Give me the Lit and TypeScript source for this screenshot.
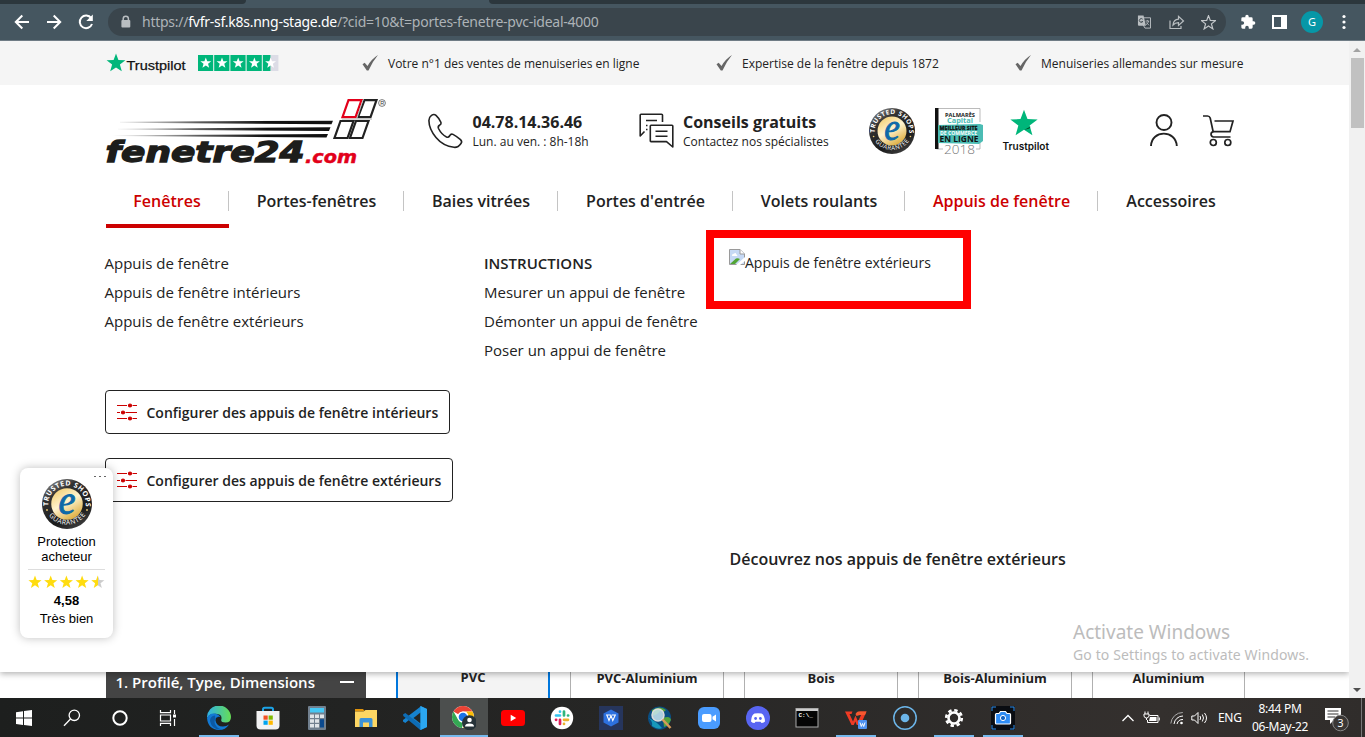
import { LitElement, html, svg, css } from "lit";
import { customElement, property } from "lit/decorators.js";

const STAR = "M10 0.8L12.4 7.3L19.4 7.5L13.9 11.8L15.8 18.5L10 14.6L4.2 18.5L6.1 11.8L0.6 7.5L7.6 7.3Z";

/** Round guarantee seal with lettering on its ring. */
@customElement("guarantee-seal")
class GuaranteeSeal extends LitElement {
  @property({ type: Number }) size = 46;
  static styles = css`
    :host { display: block; line-height: 0; }
    svg { overflow: visible; }
    .ring { font: 700 14px "Open Sans", sans-serif; fill: #fff; }
    .lower { font-weight: 400; font-size: 13.5px; }
    .e { font: italic 400 84px "Liberation Serif", serif; fill: #0f6aa8; stroke: #0f6aa8; stroke-width: 2; }
  `;
  render() {
    return html`<svg width=${this.size} height=${this.size} viewBox="0 0 100 100">
      <defs>
        <linearGradient id="dark" x1="0.2" y1="0" x2="0.8" y2="1">
          <stop offset="0" stop-color="#8a8a8a" /><stop offset="0.25" stop-color="#333" />
          <stop offset="0.7" stop-color="#1b1b1b" /><stop offset="1" stop-color="#444" />
        </linearGradient>
        <linearGradient id="gold" x1="0.2" y1="0" x2="0.8" y2="1">
          <stop offset="0" stop-color="#f3cf73" /><stop offset="0.45" stop-color="#fff3cf" />
          <stop offset="1" stop-color="#d9a52f" />
        </linearGradient>
        <path id="up" d="M13 57A37.5 37.5 0 1 1 87 57" />
        <path id="down" d="M9 65A45 45 0 0 0 91 65" />
      </defs>
      <circle cx="50" cy="50" r="50" fill="url(#dark)" />
      <circle cx="50" cy="50" r="31.5" fill="url(#gold)" />
      <text class="ring"><textPath href="#up" startOffset="3" textLength="125">TRUSTED SHOPS</textPath></text>
      <text class="ring lower"><textPath href="#down" startOffset="9" textLength="86">GUARANTEE</textPath></text>
      <circle cx="10" cy="62" r="1.8" fill="#f3cf73" /><circle cx="90" cy="62" r="1.8" fill="#f3cf73" />
      <text class="e" x="33" y="69" textLength="34" lengthAdjust="spacingAndGlyphs">e</text>
    </svg>`;
  }
}

@customElement("browser-bar")
class BrowserBar extends LitElement {
  static styles = css`
    :host { display: block; height: 41px; background: #455660; font-family: "Noto Sans", sans-serif; }
    .tabs { height: 4px; display: flex; justify-content: space-between; }
    .left, .right { background: #2c373d; }
    .left { width: 246px; border-bottom-right-radius: 4px; }
    .right { width: 876px; border-bottom-left-radius: 4px; }
    .bar { height: 36px; display: flex; align-items: center; border-bottom: 1px solid #6f7c85; }
    svg { display: block; flex: none; }
    .back { margin-left: 14px; }
    .fwd { margin-left: 16px; }
    .reload { margin-left: 15px; }
    .pill { margin-left: 13px; width: 1118px; height: 28px; border-radius: 14px; background: #3a454c; display: flex; align-items: center; box-sizing: border-box; padding: 0 10px 0 12px; }
    .url { margin-left: 10px; font-size: 14px; line-height: 28px; color: #adb3b7; white-space: nowrap; letter-spacing: -0.25px; }
    .host { color: #fff; }
    .tools { margin-left: auto; display: flex; gap: 16px; align-items: center; }
    .puzzle { margin-left: 14px; }
    .panel { margin-left: 16px; }
    .avatar { margin-left: 14px; width: 22px; height: 22px; border-radius: 50%; background: #0797a7; color: #fff; font-size: 11px; line-height: 22px; text-align: center; }
    .dots { margin-left: 19px; }
  `;
  render() {
    return html`
      <div class="tabs"><div class="left"></div><div class="right"></div></div>
      <div class="bar">
        <svg class="back" width="16" height="16" viewBox="0 0 16 16" fill="none" stroke="#fff" stroke-width="2"><path d="M15 8H2M8.3 1.5L1.8 8L8.3 14.5" /></svg>
        <svg class="fwd" width="16" height="16" viewBox="0 0 16 16" fill="none" stroke="#fff" stroke-width="2"><path d="M1 8H14M7.7 1.5L14.2 8L7.7 14.5" /></svg>
        <svg class="reload" width="18" height="18" viewBox="0 0 18 18"><path d="M14.2 5.2A6.3 6.3 0 1 0 15 11" fill="none" stroke="#fff" stroke-width="2" /><path d="M15.8 1.5V8H9.3Z" fill="#fff" /></svg>
        <div class="pill">
          <svg width="12" height="14" viewBox="0 0 12 14"><path d="M3.2 6V3.8A2.6 2.6 0 0 1 8.4 3.8V6" fill="none" stroke="#b9bec1" stroke-width="1.5" /><rect x="1.4" y="5" width="8.9" height="7.6" rx="1" fill="#b9bec1" /></svg>
          <div class="url">https://<span class="host">fvfr-sf.k8s.nng-stage.de</span>/?cid=10&amp;t=portes-fenetre-pvc-ideal-4000</div>
          <div class="tools">
            <svg width="15" height="16" viewBox="0 0 16 16"><path d="M6.5 3.5H14.4V14.5H8.5L6.5 11" fill="none" stroke="#b9bec1" /><path d="M1 1H7L9.5 12H2A1 1 0 0 1 1 11Z" fill="#b9bec1" /><path d="M6 5A2 2 0 1 0 6.2 7.5H4.7" fill="none" stroke="#3a454c" /><path d="M9 7H13M11 5.8V7M12.5 7Q11.5 10 9.5 11M10 8.5L12.8 11.5" fill="none" stroke="#b9bec1" stroke-width=".9" /></svg>
            <svg width="17" height="16" viewBox="0 0 17 16" fill="none" stroke="#b9bec1" stroke-width="1.2"><path d="M2 6.5V14.5H13V12" /><path d="M5 11Q5.5 5.5 10.5 5.2V2.3L15.5 7L10.5 11.5V8.6Q7 8.6 5 11Z" /></svg>
            <svg width="15" height="15" viewBox="0 0 20 20" fill="none" stroke="#c3c7ca" stroke-width="1.6"><path d=${STAR} /></svg>
          </div>
        </div>
        <svg class="puzzle" width="16" height="16" viewBox="0 0 24 24" fill="#fff"><path d="M20.5 11H19V7a2 2 0 0 0-2-2h-4V3.500a2.500 2.500 0 0 0-5 0V5H4a2 2 0 0 0-2 2v3.800h1.500a2.700 2.700 0 0 1 0 5.400H2V20a2 2 0 0 0 2 2h3.800v-1.500a2.700 2.700 0 0 1 5.400 0V22H17a2 2 0 0 0 2-2v-4h1.500a2.500 2.500 0 0 0 0-5z" /></svg>
        <svg class="panel" width="15" height="14" viewBox="0 0 15 14"><path fill="#fff" fill-rule="evenodd" d="M0 0H15V14H0ZM2 2V12H9V2Z" /></svg>
        <div class="avatar">G</div>
        <svg class="dots" width="4" height="16" viewBox="0 0 4 16" fill="#fff"><circle cx="2" cy="2.500" r="1.600" /><circle cx="2" cy="8" r="1.600" /><circle cx="2" cy="13.500" r="1.600" /></svg>
      </div>`;
  }
}

const tick = html`<svg width="18" height="16" viewBox="0 0 18 16"><path d="M1.500 9.200L3.700 7.800L6.500 11Q10.500 4 17 0Q11.500 6.500 7.500 15.500H5.800Z" fill="#666" /></svg>`;

@customElement("shop-header")
class ShopHeader extends LitElement {
  static styles = css`
    :host { display: block; font-family: "Open Sans", sans-serif; color: #222; white-space: nowrap; }
    svg { display: block; flex: none; overflow: visible; }
    .usp { height: 44px; background: #f5f5f5; display: flex; align-items: center; padding-left: 106px; font-size: 12px; }
    .stars { margin-left: 11px; }
    .tick { display: flex; align-items: center; gap: 9px; }
    .t1 { width: 354px; margin-left: 83px; }
    .t2 { width: 299px; }
    .head { height: 96px; display: flex; align-items: flex-start; }
    .logo { margin: 5px 0 0 95px; }
    .phone { margin: 28px 0 0 20.5px; }
    .chat { margin: 28px 0 0 0; }
    .info { margin: 28px 0 0 10px; width: 166px; }
    .info.second { width: 186px; margin-left: 9.500px; }
    .big { font-size: 16px; line-height: 18px; font-weight: 700; }
    .small { font-size: 12px; line-height: 22px; }
    .seal { margin-top: 23px; }
    .award { margin: 23px 0 0 20px; }
    .pilot { margin: 23px 0 0 18px; }
    .user { margin: 29px 0 0 98px; }
    .cart { margin: 29px 0 0 23px; }
    .nav { display: grid; grid-template-columns: 123px 175px 154px 175px 172px 193px 146px; margin-left: 106px; height: 47px; font-size: 16px; font-weight: 600; }
    .item { height: 43px; border-bottom: 4px solid transparent; }
    .on { border-bottom-color: #c00; color: #c00; }
    .red { color: #c00; }
    .label { margin-top: 10px; height: 20px; line-height: 20px; text-align: center; border-right: 1px solid #c4c4c4; padding-left: 1px; }
    .item:first-child .label { padding-left: 0; }
    .item:last-child .label { border: 0; padding: 0; }
    .tps { font: 400 13.500px "Liberation Sans", sans-serif; fill: #111; stroke: #111; stroke-width: 0.25; }
    .tpn { font: 600 10px Inter, sans-serif; fill: #111; }
    .wordmark { font: italic 700 28px "DejaVu Sans", sans-serif; fill: #1d1d1b; stroke: #1d1d1b; stroke-width: 1.3; }
    .dotcom { font: italic 700 18.500px "DejaVu Sans", sans-serif; fill: #e2001a; stroke: #e2001a; stroke-width: 0.5; }
    .award text { font-family: "Open Sans", sans-serif; font-weight: 700; }
    .award .year { font-weight: 300; }
  `;
  render() {
    const nav = ["Fenêtres", "Portes-fenêtres", "Baies vitrées", "Portes d'entrée", "Volets roulants", "Appuis de fenêtre", "Accessoires"];
    return html`
      <div class="usp">
        <svg width="81" height="22" viewBox="0 0 81 22"><path transform="translate(0 0.800)" d=${STAR} fill="#00b67a" /><text class="tps" x="20.500" y="17.900" textLength="59" lengthAdjust="spacingAndGlyphs">Trustpilot</text></svg>
        <svg class="stars" width="80" height="16" viewBox="0 0 80 16">
          ${[0, 1, 2, 3, 4].map((i) => svg`<g transform="translate(${i * 16.2} 0)"><rect width="15.200" height="16" fill="#00b67a" />${i === 4 ? svg`<rect x="7.600" width="8" height="16" fill="#dcdce6" />` : ""}<path transform="translate(2 2) scale(.58)" d=${STAR} fill="#fff" /></g>`)}
        </svg>
        <div class="tick t1">${tick}Votre n°1 des ventes de menuiseries en ligne</div>
        <div class="tick t2">${tick}Expertise de la fenêtre depuis 1872</div>
        <div class="tick">${tick}Menuiseries allemandes sur mesure</div>
      </div>
      <div class="head">
        <svg class="logo" width="312" height="80" viewBox="0 0 312 80">
          <defs><linearGradient id="speed" gradientUnits="userSpaceOnUse" x1="18" y1="0" x2="238" y2="0"><stop offset="0" stop-color="#222" stop-opacity="0" /><stop offset=".4" stop-color="#222" stop-opacity=".75" /><stop offset=".7" stop-color="#111" /></linearGradient></defs>
          <path d="M25 31.800L238 30.700L236.500 34.200L25 32.700Z" fill="url(#speed)" />
          <path d="M23 38.800L235.500 37.300L234 41L23 39.600Z" fill="url(#speed)" />
          <path d="M18 45.300L233 44L231.500 47.500L18 46.100Z" fill="url(#speed)" />
          <g fill="none" stroke-width="2.200" stroke="#222">
            <path stroke="#e2001a" d="M253.500 10.200H266.500L260.500 27.200H247.500Z" />
            <path d="M269.500 10.200H281.500L275.500 27.200H263Z" />
            <path d="M245.500 31H258.500L252.500 48H239.500Z" /><path d="M261 31H273.500L267.500 48H255Z" />
          </g>
          <path d="M247 29.100H277M268 10L262 28" stroke="#bbb" stroke-width="1" />
          <text class="wordmark" x="10.500" y="72.400" textLength="199" lengthAdjust="spacingAndGlyphs">fenetre24</text>
          <text class="dotcom" x="210" y="72.600" textLength="52" lengthAdjust="spacingAndGlyphs">.com</text>
          <circle cx="287" cy="13" r="3.400" fill="none" stroke="#444" stroke-width=".7" /><text x="285.200" y="15.200" font-family="Liberation Sans" font-size="5.500" fill="#333">R</text>
        </svg>
        <svg class="phone" width="35" height="36" viewBox="0 0 35 36" fill="none" stroke="#222" stroke-width="1.600" stroke-linejoin="round"><path d="M3.500 2.300Q6 .6 8 2.300Q11.500 5.500 13 9.500Q13.600 11 11.500 12.300Q9.600 13.500 10.500 15.500Q13.500 21.500 18.500 24Q20.500 24.800 21.500 23Q23 20.300 25 21.400Q29 23.600 32.500 26.600Q34.500 28.500 33 30.500Q30 34.800 26 34.300Q15 33 8 24.500Q1 16 .9 7.500Q1 4 3.500 2.300Z" /></svg>
        <div class="info"><div class="big">04.78.14.36.46</div><div class="small">Lun. au ven. : 8h-18h</div></div>
        <svg class="chat" width="35" height="36" viewBox="0 0 35 36" fill="none" stroke="#222" stroke-width="1.600" stroke-linejoin="round"><path d="M23.500 9V2Q23.500 1.200 22.500 1.200H2Q1.200 1.200 1.200 2V23L5.500 18.500M12 12.300H33Q33.800 12.300 33.800 13V34L27.500 28.600H12Q11.300 28.600 11.300 28V13Q11.300 12.300 12 12.300ZM7 7.500H18M7 12.500H8.500M7 16.500H8.500M16.500 18.200H28.500M16.500 23.200H28.500" /></svg>
        <div class="info second"><div class="big">Conseils gratuits</div><div class="small">Contactez nos spécialistes</div></div>
        <guarantee-seal class="seal" .size=${46}></guarantee-seal>
        <svg class="award" width="48" height="47" viewBox="0 0 48 47">
          <path d="M1.500 .5H45V14M45 35V41H1.500" fill="#fff" stroke="#aaa" stroke-width=".8" />
          <path d="M0 0H3.500V41H0Z" fill="#111" />
          <path d="M3 17L45 16L48 17V33L44 36L3 35Z" fill="#4bbcb4" />
          <text x="10" y="8.800" font-size="5.500" fill="#222" textLength="30" lengthAdjust="spacingAndGlyphs">PALMARÈS</text>
          <text x="12" y="15.200" font-size="7.500" fill="#4bbcb4" textLength="26" lengthAdjust="spacingAndGlyphs">Capital</text>
          <text x="4.500" y="21.800" font-size="5.200" fill="#111" stroke="#111" stroke-width=".3" textLength="38" lengthAdjust="spacingAndGlyphs">MEILLEUR SITE</text>
          <text x="5" y="26.600" font-size="4.800" fill="#fff" textLength="37" lengthAdjust="spacingAndGlyphs">DE COMMERCE</text>
          <text x="4.500" y="33.600" font-size="8.500" fill="#111" textLength="39" lengthAdjust="spacingAndGlyphs">EN LIGNE</text>
          <rect x="8" y="36" width="33" height="10" fill="#fff" />
          <text class="year" x="9" y="46" font-size="13.500" fill="#777" textLength="31" lengthAdjust="spacingAndGlyphs">2018</text>
        </svg>
        <svg class="pilot" width="50" height="47" viewBox="0 0 50 47"><path transform="translate(8.500 0.500) scale(1.450)" d=${STAR} fill="#00b67a" /><path d="M23 22L29.500 18.500L28.500 20.500Z" fill="#005128" /><text class="tpn" x="1.500" y="42" textLength="46.500" lengthAdjust="spacingAndGlyphs">Trustpilot</text></svg>
        <svg class="user" width="30" height="33" viewBox="0 0 30 33" fill="none" stroke="#222" stroke-width="1.900"><circle cx="15" cy="8.500" r="7.500" /><path d="M2 32C2.500 15.500 27 15.500 27.800 32" /></svg>
        <svg class="cart" width="34" height="33" viewBox="0 0 34 33" fill="none" stroke="#222" stroke-width="1.700"><path d="M1 2H5.500Q7.500 2 8.200 4L11 17M12.500 7H31L28 17.700H12Q9 18 9 20.300Q9.200 22.800 11.500 23H28.500" /><circle cx="11.300" cy="28.500" r="3" /><circle cx="25.800" cy="28.500" r="3" /></svg>
      </div>
      <div class="nav">${nav.map((n, i) => html`<div class="item ${i === 0 ? "on" : i === 5 ? "red" : ""}"><div class="label">${n}</div></div>`)}</div>`;
  }
}

@customElement("mega-menu")
class MegaMenu extends LitElement {
  static styles = css`
    :host { display: block; box-sizing: border-box; height: 444px; padding: 21px 0 0 105px; background: #fff; box-shadow: 0 2px 6px rgba(0, 0, 0, 0.3); clip-path: inset(0 0 -12px 0); position: relative; font-family: "Open Sans", sans-serif; font-size: 15px; color: #222; white-space: nowrap; }
    .cols { display: grid; grid-template-columns: 379px 245px 1fr; }
    .links { display: flex; flex-direction: column; height: 141px; }
    .first { margin-left: -0.5px; }
    .link { line-height: 29px; height: 29px; }
    .title { font-weight: 600; }
    .btn { display: flex; align-items: center; box-sizing: border-box; width: 345px; height: 44px; border: 1px solid #222; border-radius: 4px; padding-left: 11px; gap: 8.500px; font-size: 14px; font-weight: 600; }
    .btn.wide { width: 348px; margin-top: 24px; }
    .missing { display: flex; font-size: 14px; line-height: 27px; height: 301px; }
    .caption { font-size: 16px; line-height: 18px; font-weight: 600; padding-left: 0.5px; }
    .frame { position: absolute; left: 706px; top: 2px; width: 265px; height: 79px; box-sizing: border-box; border: 8px solid #f00; }
    .activate { position: absolute; left: 1073px; top: 392px; font-family: "Noto Sans", sans-serif; color: #bcbcbc; font-weight: 400; }
    .a1 { font-size: 19px; line-height: 25px; }
    .a2 { font-size: 14px; line-height: 20px; letter-spacing: 0.12px; }
    svg { display: block; flex: none; }
  `;
  render() {
    const sliders = html`<svg width="21" height="18" viewBox="0 0 21 18" stroke="#c00" stroke-width="1.200" fill="#c00"><path d="M0 2.500H10M15.500 2.500H20M0 9.500H3M8.500 9.500H20M0 15.500H10M15.500 15.500H20" /><circle cx="13" cy="2.500" r="1.500" /><circle cx="6" cy="9.500" r="1.500" /><circle cx="13" cy="15.500" r="1.500" /></svg>`;
    return html`
      <div class="cols">
        <div>
          <div class="links first"><div class="link">Appuis de fenêtre</div><div class="link">Appuis de fenêtre intérieurs</div><div class="link">Appuis de fenêtre extérieurs</div></div>
          <div class="btn">${sliders}Configurer des appuis de fenêtre intérieurs</div>
          <div class="btn wide">${sliders}Configurer des appuis de fenêtre extérieurs</div>
        </div>
        <div class="links"><div class="link title">INSTRUCTIONS</div><div class="link">Mesurer un appui de fenêtre</div><div class="link">Démonter un appui de fenêtre</div><div class="link">Poser un appui de fenêtre</div></div>
        <div>
          <div class="missing">
            <svg width="16" height="16" viewBox="0 0 16 16"><path d="M.5 .5H11L15.500 5V15.500H.5Z" fill="#c6d9f5" stroke="#9a9a9a" /><path d="M11 .5V5H15.500" fill="#fff" stroke="#9a9a9a" /><path d="M3 7Q3 4.500 5 4.800Q6.500 3 7.500 5.500Q9 6 8 7Z" fill="#fff" /><path d="M1 15L7 9.500Q9 9 11 10L6 15Z" fill="#52a535" /><path d="M7 16L16 8V12L11 16Z" fill="#fff" /></svg>Appuis de fenêtre extérieurs
          </div>
          <div class="caption">Découvrez nos appuis de fenêtre extérieurs</div>
        </div>
      </div>
      <div class="frame"></div>
      <div class="activate"><div class="a1">Activate Windows</div><div class="a2">Go to Settings to activate Windows.</div></div>`;
  }
}

@customElement("trust-badge")
class TrustBadge extends LitElement {
  static styles = css`
    :host { display: flex; flex-direction: column; align-items: center; box-sizing: border-box; width: 93px; height: 170px; border-radius: 8px; background: #fff; box-shadow: 0 0 10px rgba(0, 0, 0, 0.25); font: 13px/15px "Liberation Sans", sans-serif; color: #000; text-align: center; }
    .more { height: 11px; align-self: flex-end; padding-right: 7px; box-sizing: border-box; padding-top: 8px; }
    svg { display: block; }
    .name { margin-top: 5px; }
    .stars { margin-top: 5px; padding-top: 5px; border-top: 1px solid #ddd; width: 77px; }
    .score { font-weight: 700; margin-top: 4px; }
    .word { margin-top: 3px; }
  `;
  render() {
    return html`
      <div class="more"><svg width="12" height="2" fill="#666"><path d="M0 0H2V1H0ZM5 0H7V1H5ZM10 0H12V1H10Z" /></svg></div>
      <guarantee-seal .size=${50}></guarantee-seal>
      <div class="name">Protection<br />acheteur</div>
      <div class="stars"><svg width="77" height="14" viewBox="0 0 77 14">
        <defs><linearGradient id="half"><stop offset=".55" stop-color="#ffdc0f" /><stop offset=".55" stop-color="#ccc" /></linearGradient></defs>
        ${[0, 1, 2, 3, 4].map((i) => svg`<path transform="translate(${i * 15.7} 0) scale(.7)" d=${STAR} fill=${i < 4 ? "#ffdc0f" : "url(#half)"} />`)}</svg></div>
      <div class="score">4,58</div>
      <div class="word">Très bien</div>`;
  }
}

@customElement("task-bar")
class TaskBar extends LitElement {
  static styles = css`
    :host { display: flex; height: 39px; background: linear-gradient(90deg, #1d1f1e, #262625 45%, #34302e 85%, #302d2b); font-family: "Noto Sans", sans-serif; color: #fff; }
    .cell { width: 49px; display: flex; flex-direction: column; align-items: center; }
    .sys { width: 48px; }
    .gap { width: 2px; }
    .active { background: #4c4f4e; width: 48px; margin-left: 1px; }
    .ico { height: 37px; padding-top: 3px; box-sizing: border-box; display: flex; align-items: center; justify-content: center; }
    .line { height: 2px; width: 40px; }
    .open .line { background: #76b9ed; }
    .active .line { width: 48px; }
    svg { display: block; }
    .tray { margin-left: auto; display: flex; align-items: center; font-size: 12px; letter-spacing: -0.3px; }
    .lang { margin-left: 9px; width: 24px; }
    .clock { width: 64px; margin-left: 6px; text-align: center; line-height: 18px; }
    .note { margin-left: 12px; margin-top: 3px; }
    .edge { width: 1px; height: 39px; background: #777; margin: 0 3px 0 11px; }
    .w { margin-left: 10px; }
    .s { margin-left: 7px; }
    .b { margin-left: 8px; }
  `;
  render() {
    const I = (c: unknown) => html`<svg width="24" height="24" viewBox="0 0 24 24">${c}</svg>`;
    const sys = [
      I(svg`<path fill="#fff" d="M4 6.300L11 5.200V11.600H4ZM12 5L20 4V11.600H12ZM4 12.500H11V18.900L4 17.900ZM12 12.500H20V20L12 19Z" />`),
      I(svg`<g fill="none" stroke="#fff" stroke-width="1.300"><circle cx="14.300" cy="9.300" r="5.200" /><path d="M10.500 13L4 19.800" /></g>`),
      I(svg`<circle cx="12" cy="12" r="6.700" fill="none" stroke="#fff" stroke-width="2" />`),
      I(svg`<g fill="none" stroke="#fff" stroke-width="1.200"><path d="M4.500 4V6.600H14.500V4M4.500 20V17.400H14.500V20M4.500 9H14.500V15H4.500ZM18.500 4V8M18.500 13V20" /></g><path d="M17 8.500H20V11.500H17Z" fill="#fff" />`),
    ];
    const apps: [unknown, string][] = [
      [svg`<defs><linearGradient id="eg" x1="0" x2="1"><stop offset="0" stop-color="#2fb1e8" /><stop offset="1" stop-color="#66dd55" /></linearGradient></defs><path d="M0 12A12 12 0 0 1 24 11Q24 16.500 18.500 16.500Q13.500 16.500 14.300 13.500Q15.500 9 10.500 8Q3 7 0 12Z" fill="url(#eg)" /><path d="M0 12Q2.500 6.800 8 7.600Q12 8.200 13.500 11Q8.500 10 8.500 14.500Q9.500 20.500 16 20.500Q19.500 20.500 22 18.500Q18.500 24 12 24Q1 23.500 0 12Z" fill="#1279d4" /><path d="M8.500 14.500Q8 10.500 12.800 10.500Q6 12 8 18Q10 22.500 15 23.500Q5 24.500 3 15Q3 10 8 9.500Z" fill="#0c59a4" />`, "open"],
      [svg`<path d="M7 6V3.500Q7 1.800 8.700 1.800H15.300Q17 1.800 17 3.500V6" fill="none" stroke="#1ca4e8" stroke-width="2" /><path d="M.5 5H23.500V19.500Q23.500 23.500 19.500 23.500H4.500Q.5 23.500 .5 19.500Z" fill="#f2f2f2" /><path fill="#f25022" d="M7.500 9.500H11.700V13.700H7.500Z" /><path fill="#7fba00" d="M12.600 9.500H16.800V13.700H12.600Z" /><path fill="#00a4ef" d="M7.500 14.600H11.700V18.800H7.500Z" /><path fill="#ffb900" d="M12.600 14.600H16.800V18.800H12.600Z" />`, ""],
      [svg`<rect x="3" y="0" width="18" height="24" rx="1" fill="#71808f" /><path d="M5 2H19V6.500H5Z" fill="#45c8f5" /><path fill="#dfe4e8" d="M5 8.500H9V12H5ZM10 8.500H14V12H10ZM15 8.500H19V12H15ZM5 13.200H9V16.700H5ZM10 13.200H14V16.700H10ZM5 18H9V21.500H5ZM10 18H14V21.500H10Z" /><path d="M15 13.200H19V21.500H15Z" fill="#0b4a8f" />`, ""],
      [svg`<path d="M1 3H9L11 5.500H1Z" fill="#e0930b" /><path d="M1 5.500L9.500 5.500L11.500 4H23V21H1Z" fill="#fdd663" /><path d="M5.500 21V13.500Q5.500 12 7 12H17Q18.500 12 18.500 13.500V21H15V16.500H9V21Z" fill="#3c92d8" />`, ""],
      [svg`<path d="M17.500 0L24 3V21L17.500 24L6.500 13.500L2.300 17L0 15.500V14L17 1Z" fill="#1683cf" /><path d="M0 8.500L2.300 7L17.500 18.500V24L.3 10Z" fill="#0e6cb4" /><path d="M17.500 6.500V17.500L10.500 12Z" fill="#232625" /><path d="M17.500 0L24 3V21L17.500 24Z" fill="#2ba7f1" />`, ""],
      [svg`<circle cx="11" cy="11" r="11" fill="#fff" /><path d="M1.500 5.500A11 11 0 0 1 20.500 5.500H11A5.500 5.500 0 0 0 6.200 8.300Z" fill="#ea4335" /><path d="M20.500 5.500A11 11 0 0 1 11 22L15.800 13.700Q17.500 9 14 5.500Z" fill="#fbbc05" /><path d="M1.500 5.500L6.200 13.700Q8 16.600 11 16.500L10 22A11 11 0 0 1 1.500 5.500Z" fill="#34a853" /><circle cx="11" cy="11" r="5.500" fill="#fff" /><circle cx="11" cy="11" r="4.300" fill="#1a73e8" /><circle cx="17.500" cy="16.800" r="7.500" fill="#263238" /><circle cx="17.500" cy="14" r="2.300" fill="#fff" /><path d="M13 20.500Q13 17.500 17.500 17.500Q22 17.500 22 20.500Z" fill="#fff" />`, "active open"],
      [svg`<rect x="0" y="4" width="24" height="16" rx="3.500" fill="#f00" /><path d="M9.700 8.800V15.200L15.200 12Z" fill="#fff" />`, ""],
      [svg`<circle cx="12" cy="12" r="11.200" fill="#fff" /><g stroke-width="2.700" stroke-linecap="round"><path d="M10 5.500V5.700M6 9.500H10" stroke="#36c5f0" /><path d="M14 5.500V9.500M18 9.500H18.200" stroke="#2eb67d" /><path d="M14 13.800H18M14 17.800V18" stroke="#ecb22e" /><path d="M10 13.800V18M6 13.800H6.200" stroke="#e01e5a" /></g>`, ""],
      [svg`<rect width="24" height="24" fill="#26355c" /><path d="M12 3.500L19.500 7.500V16.500L12 20.500L4.500 16.500V7.500Z" fill="#2d71df" /><path d="M7 9H11.500M8 9.500L10 14.500L12 9.500L13.800 14.500L16.300 9H13" fill="none" stroke="#fff" stroke-width="1.100" />`, ""],
      [svg`<circle cx="11.500" cy="12" r="11.500" fill="#0a4e83" /><path d="M4 4Q12 -1 18 4Q16 7 12 5Q9 9 4 10ZM15 12Q22 9 23 14Q20 20 16 21Z" fill="#55a33d" /><path d="M1 12Q5 16 4 20Q10 24 14 22Q9 16 1 12Z" fill="#1798bb" /><circle cx="10" cy="9" r="6" fill="#c9e5ee" fill-opacity=".85" stroke="#ddd" stroke-width="1.500" /><path d="M14.500 13.500L22.500 22" stroke="#d89a5b" stroke-width="2.500" />`, ""],
      [svg`<rect x="1" y="1" width="22" height="22" rx="6" fill="#4a9cff" /><rect x="5" y="8" width="9.500" height="8" rx="2" fill="#fff" /><path d="M15.500 10.800L19 8.500V15.500L15.500 13.200Z" fill="#fff" />`, ""],
      [svg`<circle cx="12" cy="12" r="12" fill="#5865f2" /><path d="M8.500 7.500Q12 6.800 15.500 7.500Q18.500 8.500 19 15.500Q17.500 17 15.500 17L14.500 15.800H9.500L8.500 17Q6.500 17 5 15.500Q5.500 8.500 8.500 7.500Z" fill="#fff" /><circle cx="9.600" cy="12.500" r="1.400" fill="#5865f2" /><circle cx="14.400" cy="12.500" r="1.400" fill="#5865f2" />`, ""],
      [svg`<rect x="1" y="2.500" width="22" height="18.500" fill="#050505" stroke="#aaa" /><path d="M1 3H23V5H1Z" fill="#ccc" /><text x="3.500" y="11" font-family="Liberation Mono" font-size="6" font-weight="700" fill="#fff">C:\\_</text>`, ""],
      [svg`<path d="M1 5.500H8.500L7.500 8H5.500L9 15.500L11.500 9.500L14 15.500L17.500 8H14L15.500 5.500H22.500L16.500 19H12.800L11.300 15.500L9.800 19H7.500Z" fill="#ef3b24" /><path d="M14 5.500H22.500L21 9H16L12.500 10L11.500 8Q12.500 6 14 5.500Z" fill="#f5582f" /><rect x="14" y="14" width="9" height="9" rx="1" fill="#4f92f0" /><path d="M16 16.500L17.300 20.500L18.500 17.500L19.700 20.500L21 16.500" fill="none" stroke="#fff" />`, "open"],
      [svg`<circle cx="12" cy="12" r="11.200" fill="none" stroke="#6cb5e8" stroke-width="1.500" /><circle cx="12" cy="12" r="4.300" fill="#6cb5e8" />`, ""],
      [svg`<circle cx="12" cy="12" r="5.500" fill="none" stroke="#fff" stroke-width="2.600" /><circle cx="12" cy="12" r="7.800" fill="none" stroke="#fff" stroke-width="2.600" stroke-dasharray="3.400 2.726" />`, "open"],
      [svg`<rect width="24" height="24" rx="2" fill="#0a0d12" /><path d="M1 5V1H5M19 1H23V5M23 19V23H19M5 23H1V19" fill="none" stroke="#2b8be8" stroke-width="1" /><path d="M5.500 7.500H8L9.500 5.500H14.500L16 7.500H18.500Q19.500 7.500 19.500 8.500V17Q19.500 18 18.500 18H5.500Q4.500 18 4.500 17V8.500Q4.500 7.500 5.500 7.500Z" fill="#2f8df5" stroke="#fff" stroke-width="1.200" /><circle cx="12" cy="12" r="2.600" fill="#1364c4" stroke="#fff" />`, "open"],
    ];
    return html`
      ${sys.map((s) => html`<div class="cell sys"><div class="ico">${s}</div></div>`)}
      <div class="gap"></div>
      ${apps.map(([c, k]) => html`<div class="cell ${k}"><div class="ico">${I(c)}</div><div class="line"></div></div>`)}
      <div class="tray">
        <svg width="14" height="10" fill="none" stroke="#fff" stroke-width="1.300"><path d="M1.500 8L7 2.500L12.500 8" /></svg>
        <svg class="b" width="17" height="14" viewBox="0 0 17 14" fill="none" stroke="#fff"><path d="M6.500 4.500H15V11.500H4.500V9" /><path d="M7 6H13.500V10H6Z" fill="#fff" stroke="none" /><path d="M16.300 6.500V9.500M2 .5V3M5 .5V3M1 3H6V5Q5.500 7 3.500 7Q1.300 7 1 5ZM3.500 7V9" /></svg>
        <svg class="w" width="14" height="14" viewBox="0 0 14 14" fill="none" stroke="#fff"><path d="M.8 12.500A12 12 0 0 1 12.800 1.500" stroke="#aaa" /><path d="M4 13A9 9 0 0 1 13 5M7 13A6 6 0 0 1 13 8.500" /><circle cx="11.500" cy="12" r="1.300" fill="#fff" stroke="none" /></svg>
        <svg class="s" width="18" height="14" viewBox="0 0 18 14" fill="none" stroke="#fff"><path d="M.8 5H3.500L7 1.500V12.500L3.500 9H.8ZM9 5Q10.300 7 9 9M11.300 3.500Q13.700 7 11.300 10.500M13.500 2Q17.500 7 13.500 12" /></svg>
        <div class="lang">ENG</div>
        <div class="clock">8:44 PM<br />06-May-22</div>
        <svg class="note" width="26" height="25" viewBox="0 0 26 25"><path d="M1 1H17V13H10L6 17V13H1Z" fill="#fff" /><path d="M3.500 4H14.500M3.500 7H14.500M3.500 10H11" stroke="#333" /><circle cx="16.500" cy="16" r="7.800" fill="#3a3735" stroke="#888" /><text x="13.500" y="20" font-family="Noto Sans" font-size="10.500" fill="#fff">3</text></svg>
        <div class="edge"></div>
      </div>`;
  }
}

@customElement("app-root")
class AppRoot extends LitElement {
  static styles = css`
    :host { display: flex; flex-direction: column; width: 1365px; height: 737px; overflow: hidden; background: #fff; }
    .view { height: 657px; display: flex; position: relative; }
    .page { width: 1349px; overflow: hidden; }
    .scroll { width: 16px; background: #f1f1f1; display: flex; flex-direction: column; align-items: center; justify-content: space-between; box-sizing: border-box; padding: 7px 0 6px; }
    .top { display: flex; flex-direction: column; align-items: center; gap: 5px; }
    .thumb { width: 13px; height: 70px; background: #c1c1c1; }
    .up, .dn { width: 0; height: 0; border: 4px solid transparent; }
    .up { border-top-width: 0; border-bottom-color: #a3a3a3; margin-bottom: 1px; }
    .dn { border-bottom-width: 0; border-top-color: #505050; }
    .badge { position: absolute; left: 20px; top: 427px; z-index: 3; }
    .config { height: 26px; display: flex; padding-left: 106px; font: 700 13px/13px "Open Sans", sans-serif; color: #222; }
    .step { width: 260px; box-sizing: border-box; padding: 0 12px 0 9.500px; background: #444; color: #fff; font-size: 15px; font-weight: 600; line-height: 21px; display: flex; justify-content: space-between; margin-right: 30px; }
    .minus { width: 14px; height: 2px; background: #fff; margin-top: 9px; }
    .opt { box-sizing: border-box; width: 154px; margin-right: 20px; border: solid #b0b0b0; border-width: 0 1px; text-align: center; }
    .opt:last-child { width: 153px; }
    .sel { border-color: #0077dd; border-width: 0 2px; background: #f4f4f4; line-height: 11px; }
  `;
  render() {
    return html`
      <browser-bar></browser-bar>
      <div class="view">
        <div class="page">
          <shop-header></shop-header>
          <mega-menu></mega-menu>
          <div class="config">
            <div class="step">1. Profilé, Type, Dimensions<div class="minus"></div></div>
            ${["PVC", "PVC-Aluminium", "Bois", "Bois-Aluminium", "Aluminium"].map((o, i) => html`<div class="opt ${i === 0 ? "sel" : ""}">${o}</div>`)}
          </div>
        </div>
        <div class="scroll"><div class="top"><div class="up"></div><div class="thumb"></div></div><div class="dn"></div></div>
        <trust-badge class="badge"></trust-badge>
      </div>
      <task-bar></task-bar>`;
  }
}
